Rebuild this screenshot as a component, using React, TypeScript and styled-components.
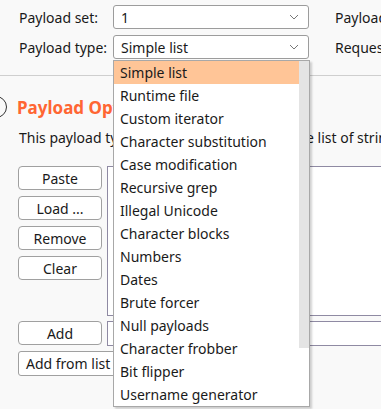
import styled, { createGlobalStyle } from "styled-components";

const GlobalStyle = createGlobalStyle`
  html, body {
    margin: 0;
    padding: 0;
    background: #f9f9f9;
    overflow: hidden;
  }
  body {
    font-family: "Noto Sans", "Open Sans", sans-serif;
    font-size: 14px;
    color: #1a1a1a;
  }
`;

const payloadTypes = [
  "Simple list",
  "Runtime file",
  "Custom iterator",
  "Character substitution",
  "Case modification",
  "Recursive grep",
  "Illegal Unicode",
  "Character blocks",
  "Numbers",
  "Dates",
  "Brute forcer",
  "Null payloads",
  "Character frobber",
  "Bit flipper",
  "Username generator",
];

const Chevron = () => (
  <svg width="10" height="6" viewBox="0 0 10 6">
    <path d="M1 1 L5 5 L9 1" fill="none" stroke="#777" strokeWidth="1" />
  </svg>
);

export default function App() {
  return (
    <Page>
      <GlobalStyle />
      <TopPanel>
        <SettingsRow>
          <Label>Payload set:</Label>
          <SelectWrap>
            <Select>
              <span>1</span>
              <Chevron />
            </Select>
          </SelectWrap>
          <SideLabel>Payload count: 0</SideLabel>
        </SettingsRow>
        <SettingsRow>
          <Label>Payload type:</Label>
          <SelectWrap>
            <Select>
              <span>Simple list</span>
              <Chevron />
            </Select>
            <Dropdown>
              <Options>
                {payloadTypes.map((t, i) => (
                  <Option key={t} $active={i === 0}>
                    {t}
                  </Option>
                ))}
              </Options>
              <ScrollTrack>
                <ScrollThumb />
              </ScrollTrack>
            </Dropdown>
          </SelectWrap>
          <SideLabel>Request count: 0</SideLabel>
        </SettingsRow>
      </TopPanel>

      <Section>
        <HeadingRow>
          <HelpCircle />
          <Heading>Payload Options [Simple list]</Heading>
        </HeadingRow>
        <Description>
          This payload type lets you configure a simple list of strings that are used as payloads.
        </Description>

        <ListArea>
          <ButtonColumn>
            <Button>Paste</Button>
            <Button>Load ...</Button>
            <Button>Remove</Button>
            <Button>Clear</Button>
          </ButtonColumn>
          <ListBox />
        </ListArea>

        <AddRow>
          <Button>Add</Button>
          <TextInput />
        </AddRow>
        <AddFromList>Add from list ...</AddFromList>
      </Section>
    </Page>
  );
}

const Page = styled.div`
  width: 381px;
  height: 409px;
  overflow: hidden;
  position: relative;
`;

const TopPanel = styled.div`
  display: flex;
  flex-direction: column;
  gap: 6px;
  padding: 5px 0 0 19px;
  height: 70px;
  border-bottom: 1px solid #cfcfcf;
`;

const SettingsRow = styled.div`
  display: flex;
  align-items: center;
  height: 24px;
  white-space: nowrap;
`;

const Label = styled.div`
  width: 94px;
  flex-shrink: 0;
`;

const SelectWrap = styled.div`
  position: relative;
  width: 196px;
  flex-shrink: 0;
`;

const Select = styled.div`
  box-sizing: border-box;
  height: 24px;
  display: flex;
  align-items: center;
  justify-content: space-between;
  padding: 0 9px 0 7px;
  background: #fff;
  border: 1px solid #9c9c9c;
  border-radius: 3px;
`;

const SideLabel = styled.div`
  margin-left: 26px;
`;

const Dropdown = styled.div`
  position: absolute;
  top: 25px;
  left: 0;
  width: 197px;
  box-sizing: border-box;
  display: flex;
  background: #fff;
  border: 1px solid #a8a8a8;
  box-shadow: 2px 2px 2px rgba(0, 0, 0, 0.18);
  z-index: 10;
`;

const Options = styled.div`
  flex: 1;
  display: flex;
  flex-direction: column;
`;

const Option = styled.div<{ $active?: boolean }>`
  height: 23px;
  line-height: 23px;
  padding-left: 6px;
  white-space: nowrap;
  background: ${(p) => (p.$active ? "#ffc597" : "transparent")};
`;

const ScrollTrack = styled.div`
  width: 10px;
  background: #fff;
`;

const ScrollThumb = styled.div`
  height: 287px;
  background: #e4e4e4;
`;

const Section = styled.div`
  padding: 19px 0 0 18px;
  display: flex;
  flex-direction: column;
`;

const HeadingRow = styled.div`
  display: flex;
  align-items: center;
  gap: 10px;
  margin-left: -33px;
  height: 24px;
`;

const HelpCircle = styled.div`
  width: 20px;
  height: 20px;
  border: 1.5px solid #333;
  border-radius: 50%;
  flex-shrink: 0;
`;

const Heading = styled.div`
  color: #ff6633;
  font-weight: bold;
  font-size: 17px;
  white-space: nowrap;
`;

const Description = styled.div`
  margin: 7px 0 0 1px;
  white-space: nowrap;
  height: 24px;
  line-height: 24px;
`;

const ListArea = styled.div`
  display: flex;
  gap: 5px;
  margin-top: 16px;
`;

const ButtonColumn = styled.div`
  display: flex;
  flex-direction: column;
  gap: 6px;
`;

const Button = styled.div`
  box-sizing: border-box;
  width: 84px;
  height: 24px;
  flex-shrink: 0;
  display: flex;
  align-items: center;
  justify-content: center;
  background: #fff;
  border: 1px solid #a0a0a0;
  border-radius: 4px;
`;

const ListBox = styled.div`
  width: 300px;
  height: 148px;
  background: #fff;
  border: 1px solid #8f8aa3;
  flex-shrink: 0;
`;

const AddRow = styled.div`
  display: flex;
  gap: 5px;
  margin-top: 5px;
`;

const TextInput = styled.div`
  width: 300px;
  height: 23px;
  background: #fff;
  border: 1px solid #8f8aa3;
  flex-shrink: 0;
`;

const AddFromList = styled.div`
  box-sizing: border-box;
  margin-top: 5px;
  width: 200px;
  height: 25px;
  padding-left: 7px;
  display: flex;
  align-items: center;
  background: #fff;
  border: 1px solid #a0a0a0;
  border-radius: 3px;
  white-space: nowrap;
`;
